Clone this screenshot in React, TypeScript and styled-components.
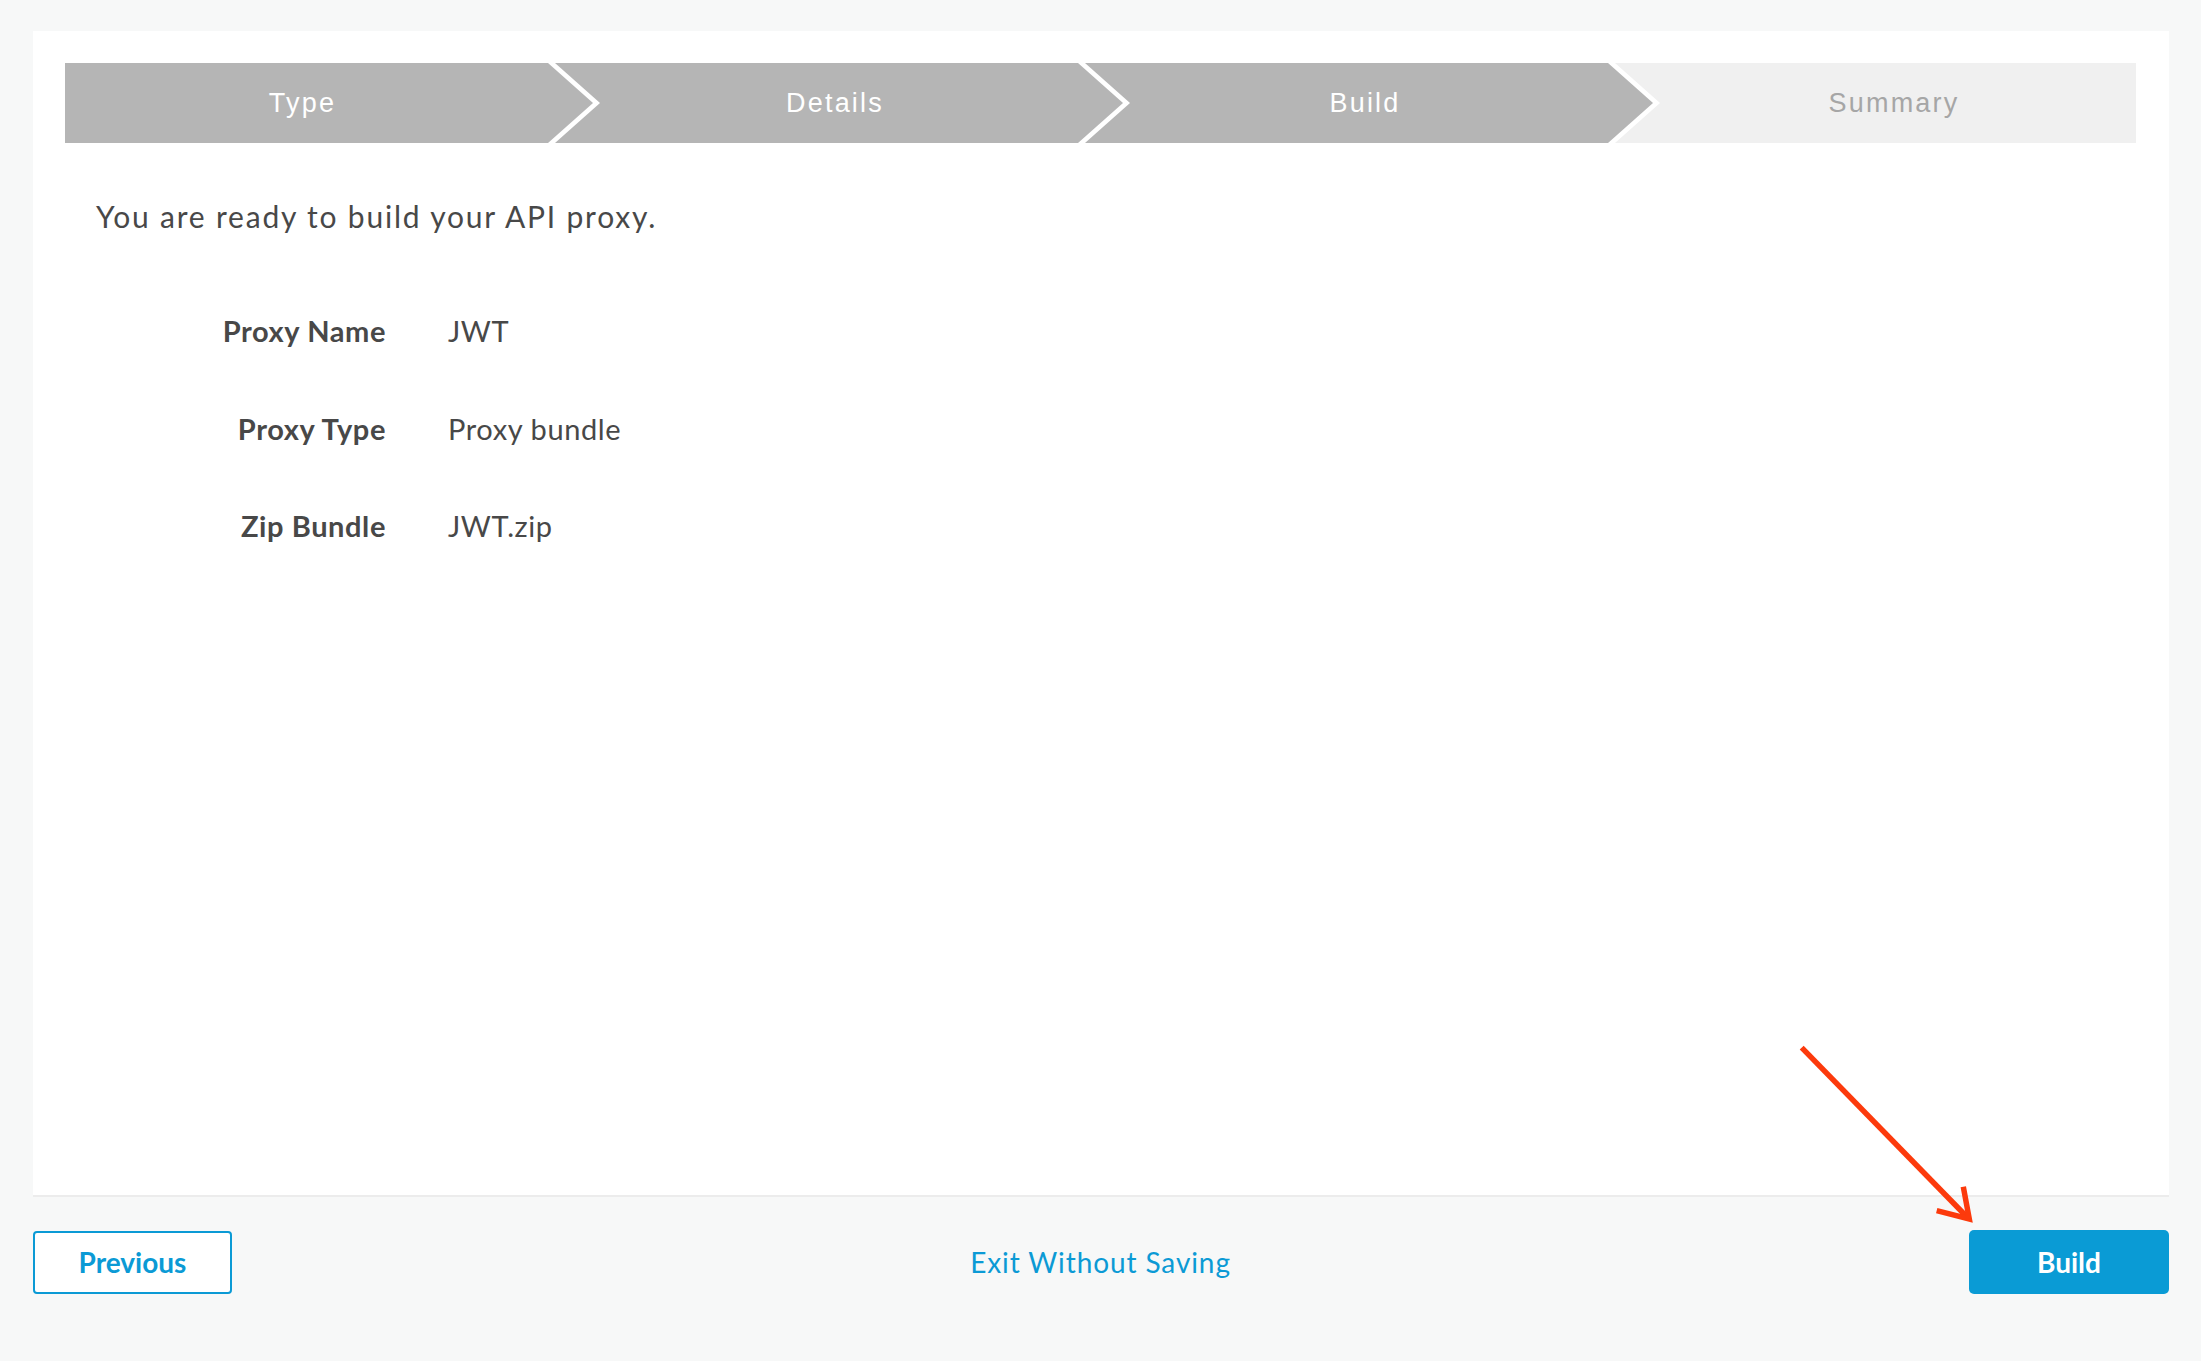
import React from "react"
import styled, { createGlobalStyle } from "styled-components"

const GlobalStyle = createGlobalStyle`
  html, body {
    margin: 0;
    padding: 0;
    background: #f7f8f8;
    font-family: Lato, "Open Sans", sans-serif;
  }
`

const Page = styled.div`
  position: relative;
  width: 2201px;
  height: 1361px;
  box-sizing: border-box;
  padding: 31px 32px 0 33px;
`

const Panel = styled.div`
  height: 1166px;
  box-sizing: border-box;
  background: #ffffff;
  border-bottom: 2px solid #ececec;
  padding: 32px 33px 0 32px;
`

const Stepper = styled.div`
  display: flex;
  height: 80px;
`

const ARROW = 45

const Step = styled.div<{ $first?: boolean; $last?: boolean; $active?: boolean; $basis: string }>`
  flex: ${(p) => p.$basis};
  margin-left: ${(p) => (p.$first ? "0" : "-38px")};
  box-sizing: border-box;
  padding-left: ${(p) => (p.$first ? "0" : `${ARROW}px`)};
  padding-right: ${(p) => (p.$last ? "8px" : `${ARROW + 8}px`)};
  background: ${(p) => (p.$active ? "#b5b5b5" : "#f0f0f0")};
  color: ${(p) => (p.$active ? "#ffffff" : "#a6a6a6")};
  clip-path: ${(p) => {
    const right = p.$last
      ? "100% 0, 100% 100%"
      : `calc(100% - ${ARROW}px) 0, 100% 50%, calc(100% - ${ARROW}px) 100%`
    const left = p.$first ? "0 100%" : `0 100%, ${ARROW}px 50%`
    return `polygon(0 0, ${right}, ${left})`
  }};
  font-family: "Liberation Sans", Arial, sans-serif;
  font-size: 27px;
  letter-spacing: 2.2px;
  line-height: 80px;
  text-align: center;
`

const Intro = styled.p`
  margin: 55px 0 0 31px;
  font-size: 30px;
  line-height: 36px;
  letter-spacing: 1.8px;
  color: #484848;
`

const Details = styled.div`
  display: grid;
  grid-template-columns: 321px auto;
  column-gap: 62px;
  row-gap: 63.5px;
  margin-top: 80px;
  font-size: 29px;
  line-height: 34px;
  letter-spacing: 0.6px;
  color: #484848;
`

const Label = styled.div`
  font-weight: 700;
  text-align: right;
`

const Value = styled.div`
  font-weight: 400;
`

const Footer = styled.div`
  display: flex;
  align-items: center;
  justify-content: space-between;
  margin-top: 33px;
`

const Button = styled.button<{ $primary?: boolean }>`
  width: ${(p) => (p.$primary ? "200px" : "199px")};
  height: ${(p) => (p.$primary ? "64px" : "63px")};
  box-sizing: border-box;
  border: ${(p) => (p.$primary ? "none" : "2px solid #0b9ad5")};
  border-radius: ${(p) => (p.$primary ? "5px" : "4px")};
  background: ${(p) => (p.$primary ? "#0a9bd5" : "#ffffff")};
  color: ${(p) => (p.$primary ? "#ffffff" : "#0b9ad5")};
  font-family: Lato, sans-serif;
  font-size: 28px;
  font-weight: 700;
  cursor: pointer;
`

const ExitLink = styled.a`
  font-size: 28px;
  color: #0b9ad5;
  text-decoration: none;
  letter-spacing: 0.9px;
  cursor: pointer;
`

const Pointer = styled.svg`
  position: absolute;
  left: 1790px;
  top: 1038px;
  overflow: visible;
`

const steps = [
  { name: "Type", basis: "0 0 528px", active: true },
  { name: "Details", basis: "0 0 568px", active: true },
  { name: "Build", basis: "0 0 568px", active: true },
  { name: "Summary", basis: "1 1 0", active: false },
]

const details = [
  ["Proxy Name", "JWT"],
  ["Proxy Type", "Proxy bundle"],
  ["Zip Bundle", "JWT.zip"],
]

const App = () => {
  return (
    <Page>
      <GlobalStyle />
      <Panel>
        <Stepper>
          {steps.map((s, i) => (
            <Step
              key={s.name}
              $first={i === 0}
              $last={i === steps.length - 1}
              $active={s.active}
              $basis={s.basis}
            >
              {s.name}
            </Step>
          ))}
        </Stepper>
        <Intro>You are ready to build your API proxy.</Intro>
        <Details>
          {details.map(([label, value]) => (
            <React.Fragment key={label}>
              <Label>{label}</Label>
              <Value>{value}</Value>
            </React.Fragment>
          ))}
        </Details>
      </Panel>
      <Footer>
        <Button>Previous</Button>
        <ExitLink>Exit Without Saving</ExitLink>
        <Button $primary>Build</Button>
      </Footer>
      <Pointer width="190" height="190" viewBox="0 0 190 190">
        <g stroke="#fc3a0c" strokeWidth="5.5" fill="none" strokeLinecap="butt" strokeLinejoin="miter">
          <line x1="11.7" y1="9.7" x2="178" y2="180" />
          <polyline points="146.7,172.7 179.3,181 173.3,148.7" />
        </g>
      </Pointer>
    </Page>
  )
}

export default App
